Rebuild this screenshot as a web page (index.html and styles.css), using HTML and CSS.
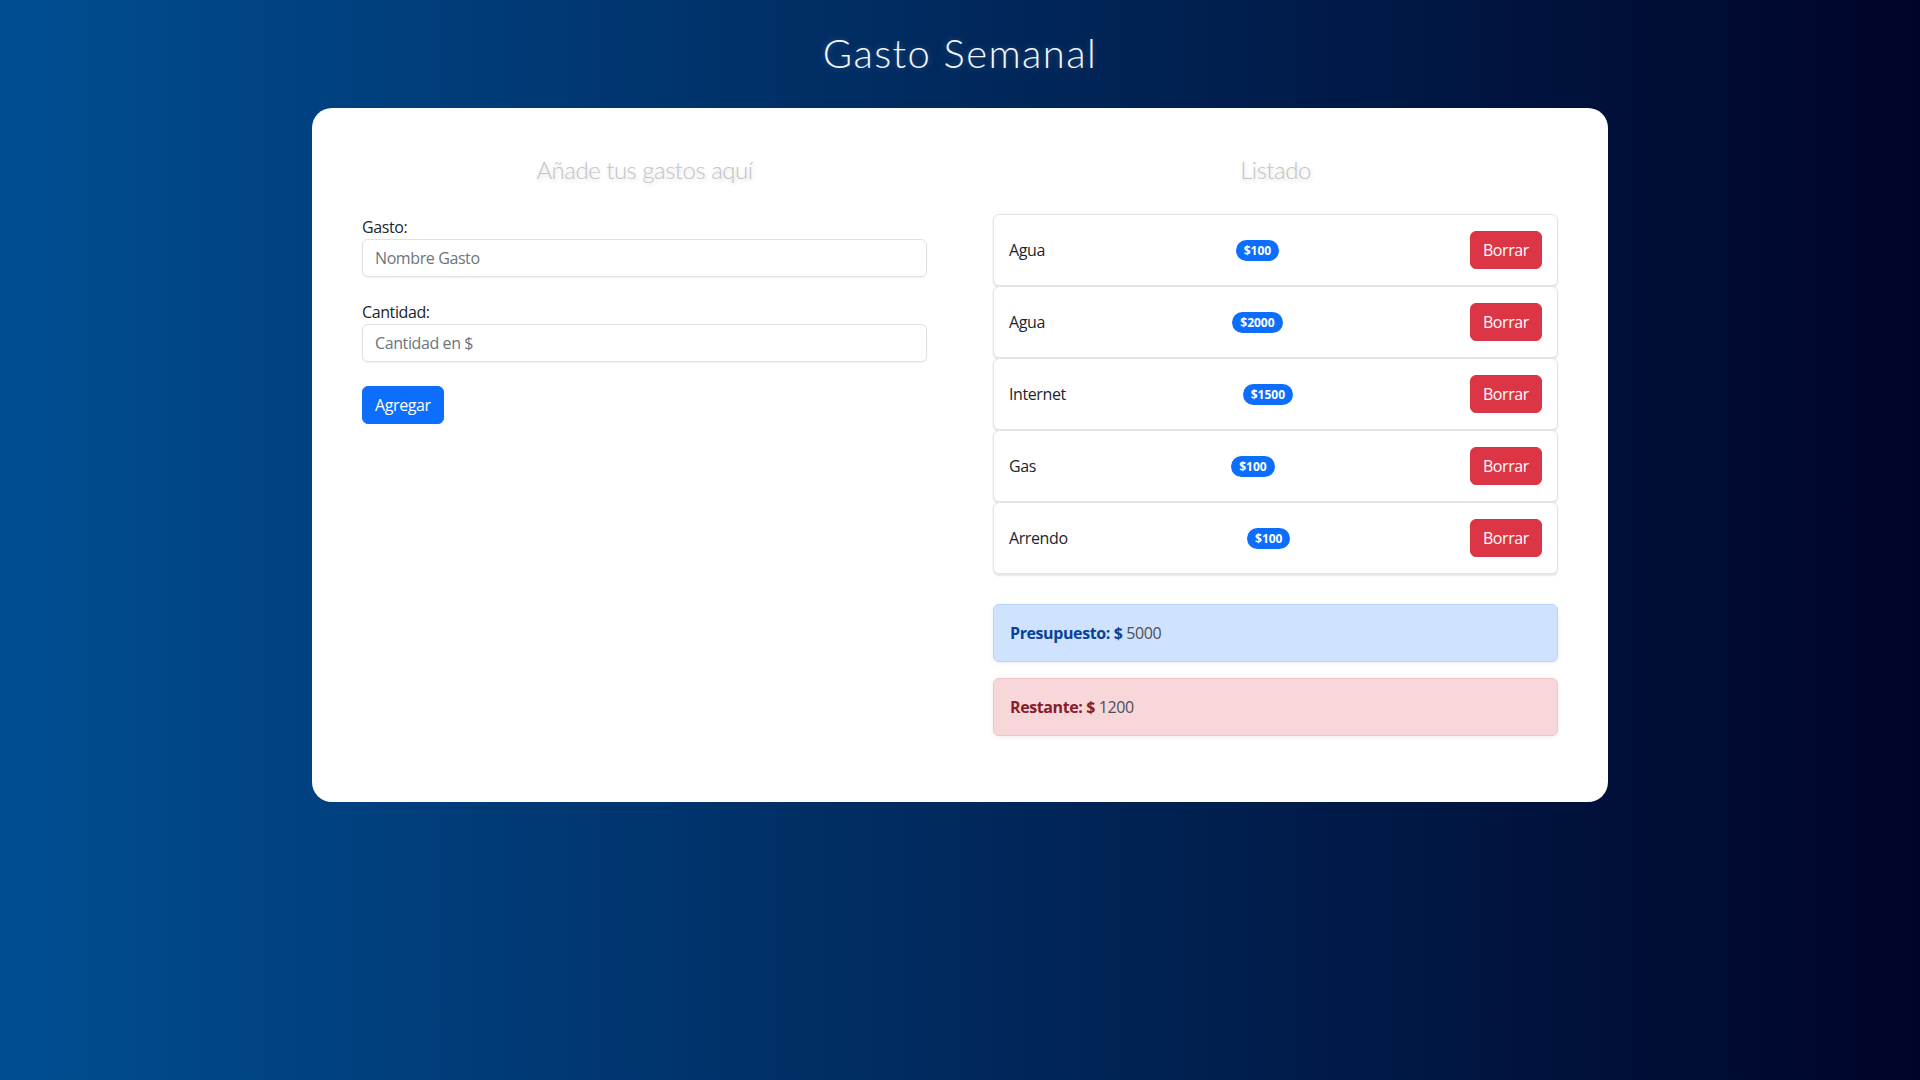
FILE: index.html
```html
<!DOCTYPE html>
<html lang="es">
<head>
<meta charset="utf-8">
<title>Gasto Semanal</title>
<link rel="stylesheet" href="styles.css">
</head>
<body>
<div class="page">
  <h1 class="title">Gasto Semanal</h1>
  <div class="card">
    <div class="col">
      <h2 class="heading">Añade tus gastos aquí</h2>
      <form class="form">
        <div class="field">
          <label class="label">Gasto:</label>
          <input class="input" type="text" placeholder="Nombre Gasto">
        </div>
        <div class="field">
          <label class="label">Cantidad:</label>
          <input class="input" type="number" placeholder="Cantidad en $">
        </div>
        <button type="button" class="btn btn-primary">Agregar</button>
      </form>
    </div>
    <div class="col">
      <h2 class="heading">Listado</h2>
      <ul class="list">
        <li class="item"><span class="name">Agua</span><span class="badge">$100</span><button type="button" class="btn btn-danger">Borrar</button></li>
        <li class="item"><span class="name">Agua</span><span class="badge">$2000</span><button type="button" class="btn btn-danger">Borrar</button></li>
        <li class="item"><span class="name">Internet</span><span class="badge">$1500</span><button type="button" class="btn btn-danger">Borrar</button></li>
        <li class="item"><span class="name">Gas</span><span class="badge">$100</span><button type="button" class="btn btn-danger">Borrar</button></li>
        <li class="item"><span class="name">Arrendo</span><span class="badge">$100</span><button type="button" class="btn btn-danger">Borrar</button></li>
      </ul>
      <div class="alert alert-primary"><strong>Presupuesto: $</strong> <span class="value">5000</span></div>
      <div class="alert alert-danger"><strong>Restante: $</strong> <span class="value">1200</span></div>
    </div>
  </div>
</div>
</body>
</html>
```
FILE: styles.css
```css
* { box-sizing: border-box; }

html, body { height: 100%; }

body {
  margin: 0;
  min-height: 100vh;
  background: linear-gradient(to right, #004e92, #000428);
  font-family: "Open Sans", "Noto Sans", sans-serif;
  font-size: 16px;
  line-height: 1.5;
  letter-spacing: -0.4px;
  color: #212529;
}

.page {
  padding-top: 29px;
}

.title {
  margin: 0 0 31px;
  text-align: center;
  font-family: "Lato", "Inter", sans-serif;
  font-weight: 300;
  font-size: 40px;
  line-height: 48px;
  letter-spacing: 1.4px;
  color: #f2f7ff;
  text-shadow: 0 0 6px rgba(255, 255, 255, 0.2);
}

.card {
  width: 1296px;
  margin: 0 auto;
  background: #fff;
  border-radius: 20px;
  padding: 50px;
  display: grid;
  grid-template-columns: 1fr 1fr;
  column-gap: 66px;
  align-items: start;
}

.heading {
  margin: 0 0 32px;
  text-align: center;
  font-family: "Lato", "Open Sans", sans-serif;
  font-weight: 300;
  font-size: 24px;
  line-height: 24px;
  letter-spacing: -0.5px;
  color: #c4c4c4;
  text-shadow: 1px 2px 4px rgba(0, 0, 0, 0.16);
}

.form { margin: 0; padding-top: 2px; }

.field { margin-bottom: 24px; }

.label {
  display: block;
  line-height: 23px;
}

.input {
  display: block;
  width: 100%;
  height: 38px;
  padding: 6px 12px;
  font: inherit;
  letter-spacing: inherit;
  color: #212529;
  border: 1px solid #dee2e6;
  border-radius: 6px;
  box-shadow: 0 1px 2px rgba(0, 0, 0, 0.06);
  background: #fff;
}

.input::placeholder { color: #6c757d; }

.input::-webkit-outer-spin-button,
.input::-webkit-inner-spin-button { -webkit-appearance: none; margin: 0; }

.btn {
  display: inline-block;
  height: 38px;
  padding: 6px 12px;
  font: inherit;
  letter-spacing: inherit;
  line-height: 24px;
  border: 1px solid transparent;
  border-radius: 6px;
  color: #fff;
  cursor: pointer;
}

.btn-primary { background: #0d6efd; border-color: #0d6efd; }

.btn-danger { background: #dc3545; border-color: #dc3545; }

.list {
  list-style: none;
  margin: 0 0 30px;
  padding: 0;
}

.item {
  display: flex;
  justify-content: space-between;
  align-items: center;
  padding: 16px 15px;
  border: 1px solid #e3e3e3;
  border-radius: 6px;
  box-shadow: 0 2px 2px rgba(0, 0, 0, 0.1);
  background: #fff;
}

.badge {
  display: inline-block;
  padding: 4px 8px;
  font-size: 12px;
  font-weight: 700;
  line-height: 13px;
  letter-spacing: 0;
  color: #fff;
  background: #0d6efd;
  border-radius: 50rem;
}

.alert {
  padding: 16px;
  margin-bottom: 16px;
  border: 1px solid transparent;
  border-radius: 6px;
  box-shadow: 0 1px 4px rgba(0, 0, 0, 0.08);
}

.alert-primary {
  color: #084298;
  background: #cfe2ff;
  border-color: #b6d4fe;
}

.alert-danger {
  color: #842029;
  background: #f8d7da;
  border-color: #f5c2c7;
}

.value { color: #495057; }
```
